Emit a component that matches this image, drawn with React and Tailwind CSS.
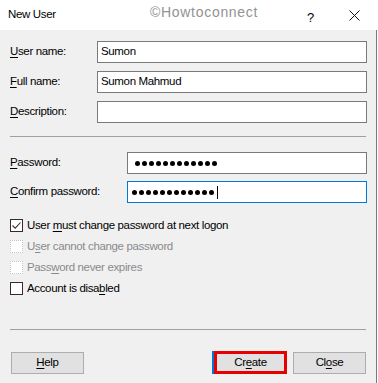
import React from 'react';

const Dots = ({ caret }) => (
  <div className="flex items-center gap-[2px] pl-[4px] h-full">
    {Array.from({ length: 12 }).map((_, i) => (
      <span key={i} className="block w-[5px] h-[5px] rounded-full bg-black" />
    ))}
    {caret && <span className="block w-[1px] h-[13px] bg-black ml-[1px]" />}
  </div>
);

const Field = ({ label, accel, rest, value, left = 'w-[97px]', width = 'w-[270px]' }) => (
  <div className="flex items-center h-[22px]">
    <div className={`${left} pl-[10px]`}>
      <span className="underline underline-offset-2">{accel}</span>
      {rest}
    </div>
    <div className={`${width} h-[22px] bg-white border border-[#7a7a7a] flex items-center pl-[3px]`}>
      {value}
    </div>
  </div>
);

const Check = ({ checked, disabled, children }) => (
  <div className="flex items-center h-[21px] pl-[10px]">
    <div
      className={`w-[13px] h-[13px] bg-white flex items-center justify-center ${
        disabled ? 'border border-dotted border-[#c4c4c4]' : 'border border-[#3b253b]'
      }`}
    >
      {checked && (
        <svg width="11" height="11" viewBox="0 0 11 11">
          <path d="M1.5 5.5 L4.2 8.2 L9.5 2.5" fill="none" stroke="#333" strokeWidth="1.1" />
        </svg>
      )}
    </div>
    <span className={`ml-[4px] ${disabled ? 'text-[#8a8a8a]' : 'text-black'}`}>{children}</span>
  </div>
);

const Button = ({ children, className = '' }) => (
  <div
    className={`h-[22px] w-[73px] bg-[#e1e1e1] border border-[#adadad] flex items-center justify-center ${className}`}
  >
    {children}
  </div>
);

export default function App() {
  return (
    <div
      className="w-[378px] h-[383px] bg-white text-[11.5px] tracking-[-0.35px] text-black overflow-hidden"
      style={{ fontFamily: '"Liberation Sans", Arial, sans-serif' }}
    >
      {/* title bar */}
      <div className="relative h-[30px] flex items-center">
        <span className="pl-[8px]">New User</span>
        <span className="absolute left-[150px] top-[2px] text-[14px] tracking-[0.7px] text-[#929292]">
          ©Howtoconnect
        </span>
        <span className="absolute left-[307px] top-[8px] text-[13px]">?</span>
        <svg className="absolute left-[349px] top-[10px]" width="11" height="11" viewBox="0 0 11 11">
          <path d="M0.5 0.5 L10.5 10.5 M10.5 0.5 L0.5 10.5" stroke="#111" strokeWidth="1" />
        </svg>
      </div>

      {/* body */}
      <div className="w-[377px] h-[353px] bg-[#f0f0f0] border-r border-[#7a7a7a] pt-[11px]">
        <div className="flex flex-col gap-[8px]">
          <Field accel="U" rest="ser name:" value="Sumon" />
          <Field accel="F" rest="ull name:" value="Sumon Mahmud" />
          <Field accel="D" rest="escription:" value="" />
        </div>

        <div className="ml-[10px] mt-[13px] w-[356px] h-[1px] bg-[#a0a0a0]" />

        <div className="flex flex-col gap-[7px] mt-[15px]">
          <Field accel="P" rest="assword:" left="w-[127px]" width="w-[240px]" value={<Dots />} />
          <div className="flex items-center h-[22px]">
            <div className="w-[127px] pl-[10px]">
              <span className="underline underline-offset-2">C</span>onfirm password:
            </div>
            <div className="w-[240px] h-[22px] bg-white border border-[#0078d7]">
              <Dots caret />
            </div>
          </div>
        </div>

        <div className="mt-[12px] flex flex-col">
          <Check checked>
            User <span className="underline underline-offset-2">m</span>ust change password at next logon
          </Check>
          <Check disabled>
            U<span className="underline underline-offset-2">s</span>er cannot change password
          </Check>
          <Check disabled>
            Pass<span className="underline underline-offset-2">w</span>ord never expires
          </Check>
          <Check>
            Account is disa<span className="underline underline-offset-2">b</span>led
          </Check>
        </div>

        <div className="ml-[10px] mt-[30px] w-[356px] h-[1px] bg-[#a0a0a0]" />

        <div className="mt-[21px] flex items-center pl-[11px]">
          <Button>
            <span className="underline underline-offset-2">H</span>elp
          </Button>
          <div className="ml-[128px] h-[23px] border-l-2 border-[#0078d7] flex">
            <div className="w-[73px] h-[23px] bg-[#e1e1e1] border-[3px] border-[#e60000] flex items-center justify-center">
              Cr<span className="underline underline-offset-2">e</span>ate
            </div>
          </div>
          <Button className="ml-[6px]">
            Cl<span className="underline underline-offset-2">o</span>se
          </Button>
        </div>
      </div>
    </div>
  );
}
